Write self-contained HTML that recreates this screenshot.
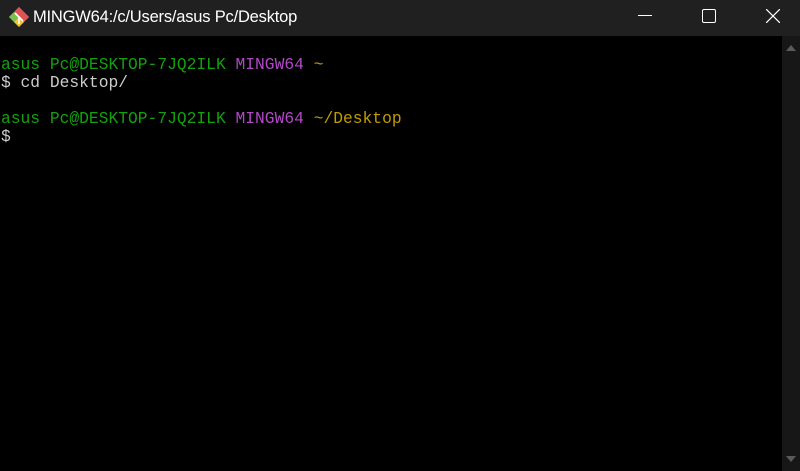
<!DOCTYPE html>
<html><head><style>
html,body{margin:0;padding:0;width:800px;height:471px;overflow:hidden;background:#0c0c0c;}
.title{position:absolute;left:0;top:0;width:800px;height:36px;background:#202020;}
.title .t{position:absolute;left:33px;top:8px;color:#fff;font:16.5px "Liberation Sans",sans-serif;letter-spacing:-0.2px;}
.term{position:absolute;left:0;top:36px;width:782px;height:435px;background:#000;}
.sb{position:absolute;left:782px;top:36px;width:18px;height:435px;background:#171717;}
pre{position:absolute;left:1px;top:56px;margin:0;font:16.3px/18px "Liberation Mono",monospace;color:#cccccc;}
.g{color:#13a10e}.m{color:#b148c6}.y{color:#c19c00}
</style></head><body>
<div class="title">
<svg style="position:absolute;left:8px;top:6px" width="22" height="22" viewBox="0 0 22 22">
<polygon points="11,1 21,11 11,21 1,11" fill="#3b8ee0"/>
<polygon points="11,1 21,11 16,16 6,6" fill="#e05353"/>
<polygon points="11,21 16,16 11,11 6,16" fill="#f2c335"/>
<polygon points="1,11 6,6 11,11 6,16" fill="#7cc14e"/>
<path d="M7,7 L15,15 M11,11 L11,18" stroke="#fff" stroke-width="1.6"/>
</svg>
<div class="t">MINGW64:/c/Users/asus Pc/Desktop</div>
<div style="position:absolute;left:638px;top:15px;width:14px;height:1px;background:#fff"></div>
<div style="position:absolute;left:702px;top:9px;width:12px;height:12px;border:1.3px solid #fff;border-radius:2px"></div>
<svg style="position:absolute;left:766px;top:9px" width="14" height="14"><path d="M0,0L14,14M14,0L0,14" stroke="#fff" stroke-width="1.2"/></svg>
</div>
<div class="term"></div>
<div class="sb">
<svg style="position:absolute;left:4px;top:9px" width="10" height="7"><polygon points="5,0 10,6 0,6" fill="#5a5a5a"/></svg>
<svg style="position:absolute;left:4px;top:420px" width="10" height="7"><polygon points="0,0 10,0 5,6" fill="#5a5a5a"/></svg>
</div>
<pre><span class="g">asus Pc@DESKTOP-7JQ2ILK</span> <span class="m">MINGW64</span> <span class="y">~</span>
$ cd Desktop/

<span class="g">asus Pc@DESKTOP-7JQ2ILK</span> <span class="m">MINGW64</span> <span class="y">~/Desktop</span>
$</pre>
</body></html>
